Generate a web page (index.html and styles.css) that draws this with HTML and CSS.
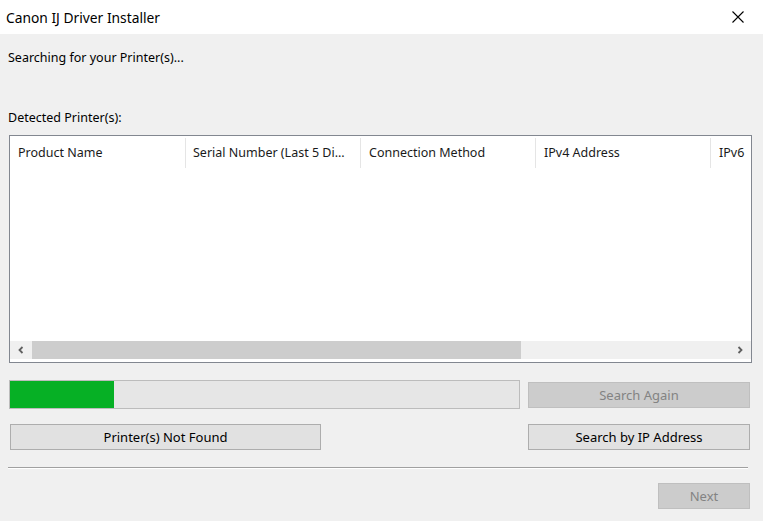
FILE: index.html
```html
<!DOCTYPE html>
<html lang="en">
<head>
    <meta charset="UTF-8">
    <title>Canon IJ Driver Installer</title>
    <link rel="stylesheet" href="styles.css">
</head>
<body>

<div class="title-bar">
    <span class="title">Canon IJ Driver Installer</span>
    <span class="close">
        <svg width="12" height="12" viewBox="0 0 12 12"><path d="M0.5 0.5 L11.5 11.5 M11.5 0.5 L0.5 11.5" stroke="#000" stroke-width="1.1" fill="none"/></svg>
    </span>
</div>

<div class="content">
    <p class="status-text">Searching for your Printer(s)...</p>
    <p class="list-label">Detected Printer(s):</p>

    <div class="list-box">
        <div class="list-header">
            <div class="col col-name">Product Name</div>
            <div class="col col-serial">Serial Number (Last 5 Di...</div>
            <div class="col col-conn">Connection Method</div>
            <div class="col col-ipv4">IPv4 Address</div>
            <div class="col col-ipv6">IPv6</div>
        </div>
        <div class="list-body">
            <!-- printers found go here -->
        </div>
        <div class="h-scroll">
            <div class="scroll-arrow">
                <svg width="8" height="8" viewBox="0 0 8 8"><path d="M5.5 1 L2.5 4 L5.5 7" stroke="#606060" stroke-width="1.8" fill="none"/></svg>
            </div>
            <div class="scroll-track">
                <div class="scroll-thumb"></div>
            </div>
            <div class="scroll-arrow">
                <svg width="8" height="8" viewBox="0 0 8 8"><path d="M2.5 1 L5.5 4 L2.5 7" stroke="#606060" stroke-width="1.8" fill="none"/></svg>
            </div>
        </div>
    </div>

    <div class="row progress-row">
        <div class="progress">
            <div class="progress-fill" style="width: 20.5%"></div>
        </div>
        <button class="btn btn-wide" disabled>Search Again</button>
    </div>

    <div class="row">
        <button class="btn btn-notfound">Printer(s) Not Found</button>
        <button class="btn btn-wide">Search by IP Address</button>
    </div>

    <div class="separator"></div>

    <div class="footer-row">
        <button class="btn btn-next" disabled>Next</button>
    </div>
</div>

</body>
</html>
```

FILE: styles.css
```css
body {
    margin: 0;
    background-color: #f0f0f0;
    font-family: "Noto Sans", "Open Sans", sans-serif;
    font-size: 12.5px;
    color: #000;
}

.title-bar {
    background-color: #fff;
    height: 34px;
    display: flex;
    justify-content: space-between;
    align-items: center;
    padding: 0 19px 0 6px;
}

.title {
    font-size: 13.8px;
}

.close {
    display: flex;
}

.content {
    padding: 0 11px 0 9px;
}

.status-text {
    margin: 0 0 0 -1px;
    padding-top: 15px;
    height: 18px;
    line-height: 18px;
}

.list-label {
    margin: 0 0 0 -1px;
    padding-top: 42px;
    height: 18px;
    line-height: 18px;
}

.list-box {
    margin-top: 8px;
    background-color: #fff;
    border: 1px solid #828790;
    height: 226px;
    display: flex;
    flex-direction: column;
    overflow: hidden;
}

.list-header {
    display: flex;
    height: 34px;
    align-items: center;
    white-space: nowrap;
}

.col {
    height: 30px;
    line-height: 30px;
    padding-left: 8px;
    border-right: 1px solid #e5e5e5;
    box-sizing: border-box;
    flex-shrink: 0;
    color: #1a1a1a;
}

.col-name { width: 176px; }
.col-serial { width: 175px; padding-left: 7px; }
.col-conn { width: 175px; }
.col-ipv4 { width: 175px; }
.col-ipv6 { width: 40px; border-right: none; }

.list-body {
    flex: 1;
}

.h-scroll {
    height: 18px;
    display: flex;
    background-color: #f0f0f0;
    margin-bottom: 3px;
}

.scroll-arrow {
    width: 22px;
    display: flex;
    align-items: center;
    justify-content: center;
}

.scroll-track {
    flex: 1;
}

.scroll-thumb {
    width: 489px;
    height: 100%;
    background-color: #cdcdcd;
}

.row {
    display: flex;
    justify-content: space-between;
    align-items: center;
}

.progress-row {
    margin-top: 17px;
}

.progress {
    width: 511px;
    height: 29px;
    background-color: #e6e6e6;
    border: 1px solid #bcbcbc;
    box-sizing: border-box;
}

.progress-fill {
    height: 100%;
    background-color: #06b025;
}

.btn {
    font-family: inherit;
    font-size: 13px;
    height: 26px;
    background-color: #e1e1e1;
    border: 1px solid #adadad;
    color: #000;
    padding: 0;
}

.btn:disabled {
    background-color: #cccccc;
    border-color: #bfbfbf;
    color: #838383;
}

.btn-wide {
    width: 222px;
    margin-right: 2px;
}

.btn-notfound {
    width: 311px;
    margin-left: 1px;
}

.row + .row {
    margin-top: 15px;
}

.separator {
    margin: 17px 4px 0 -1px;
    border-top: 1px solid #a0a0a0;
    border-bottom: 1px solid #fff;
}

.footer-row {
    display: flex;
    justify-content: flex-end;
    margin-top: 14px;
}

.btn-next {
    width: 92px;
    margin-right: 2px;
}
```
